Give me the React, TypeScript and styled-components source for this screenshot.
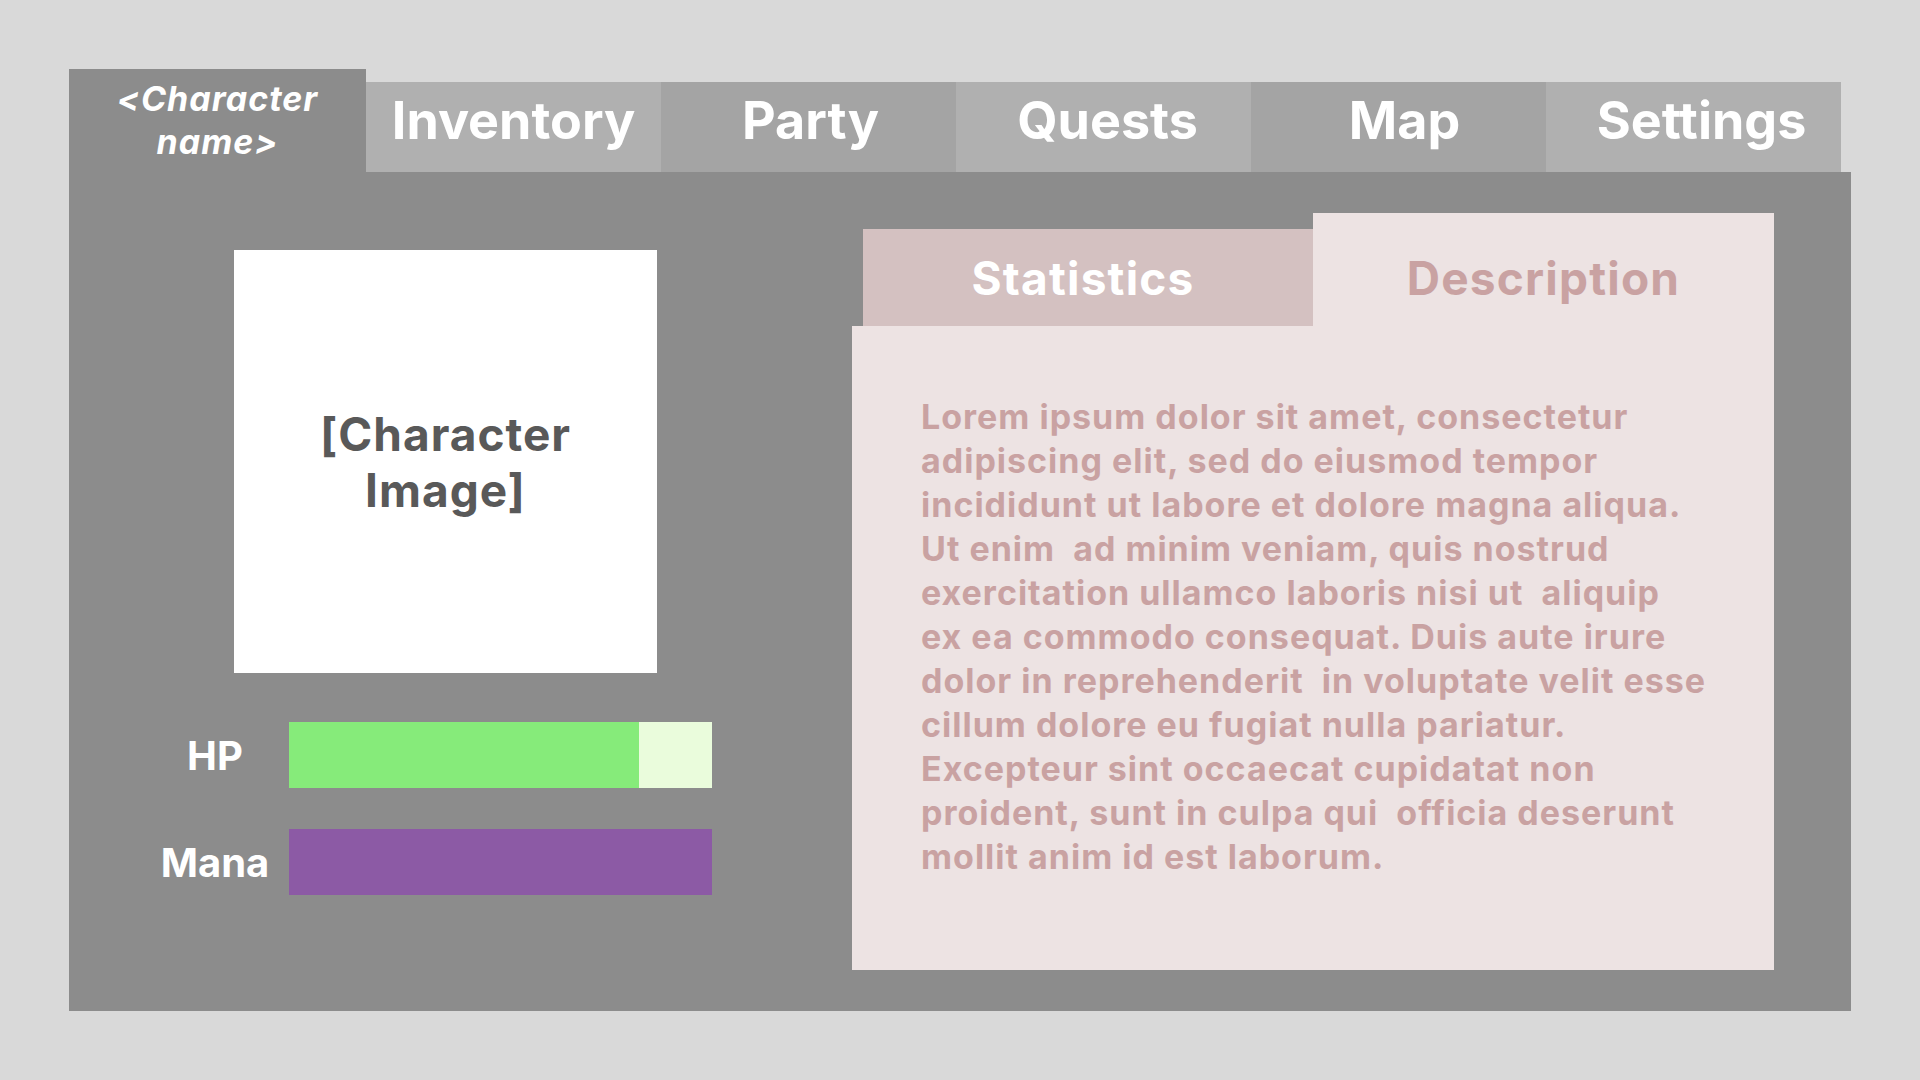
import styled, { createGlobalStyle } from "styled-components";

const GlobalStyle = createGlobalStyle`
  html, body {
    margin: 0;
    padding: 0;
    background: #d9d9d9;
  }
  body {
    font-family: Inter, "Noto Sans", "Liberation Sans", sans-serif;
  }
`;

const Page = styled.div`
  width: 1920px;
  height: 1080px;
  padding: 69px 0 0 69px;
  box-sizing: border-box;
`;

const Window = styled.div`
  width: 1782px;
  display: flex;
  flex-direction: column;
`;

const TopTabs = styled.div`
  display: flex;
  align-items: flex-end;
  height: 103px;
`;

const NameTab = styled.div`
  width: 297px;
  height: 103px;
  background: #8c8c8c;
  color: #fff;
  font-size: 34px;
  font-weight: 700;
  font-style: italic;
  letter-spacing: 1px;
  line-height: 43px;
  text-align: center;
  display: flex;
  align-items: center;
  justify-content: center;
  padding-bottom: 1px;
  box-sizing: border-box;
`;

const TopTab = styled.div<{ $shade: string; $nudge: number }>`
  width: 295px;
  height: 90px;
  background: ${({ $shade }) => $shade};
  color: #fff;
  font-size: 52px;
  font-weight: 700;
  display: flex;
  align-items: flex-end;
  justify-content: center;
  padding-bottom: 20px;
  padding-left: ${({ $nudge }) => $nudge}px;
  box-sizing: border-box;
`;

const Panel = styled.div`
  background: #8c8c8c;
  height: 839px;
  display: flex;
  padding: 41px 77px 41px 0;
  box-sizing: border-box;
`;

const LeftColumn = styled.div`
  width: 783px;
  flex-shrink: 0;
  display: flex;
  flex-direction: column;
  padding-left: 72px;
  padding-top: 37px;
  box-sizing: border-box;
`;

const Portrait = styled.div`
  width: 423px;
  height: 423px;
  margin-left: 93px;
  background: #fff;
  color: #595959;
  font-size: 46px;
  font-weight: 700;
  letter-spacing: 1px;
  line-height: 56px;
  text-align: center;
  display: flex;
  align-items: center;
  justify-content: center;
`;

const Stats = styled.div`
  display: grid;
  grid-template-columns: 148px 423px;
  row-gap: 41px;
  margin-top: 49px;
`;

const StatLabel = styled.div`
  color: #fff;
  font-size: 40px;
  font-weight: 700;
  text-align: center;
  display: flex;
  align-items: center;
  justify-content: center;
`;

const Bar = styled.div<{ $track: string; $fill: string }>`
  height: 66px;
  background: ${({ $track }) => $track};
  display: flex;

  & > span {
    display: block;
    height: 100%;
    background: ${({ $fill }) => $fill};
  }
`;

const RightColumn = styled.div`
  width: 922px;
  display: flex;
  flex-direction: column;
`;

const InfoTabs = styled.div`
  display: flex;
  align-items: flex-end;
  padding-left: 11px;
`;

const InfoTab = styled.div<{ $active?: boolean }>`
  width: ${({ $active }) => ($active ? "461px" : "450px")};
  height: ${({ $active }) => ($active ? "113px" : "97px")};
  background: ${({ $active }) => ($active ? "#ede3e3" : "#d4c1c1")};
  color: ${({ $active }) => ($active ? "#c9a2a2" : "#fff")};
  font-size: 46px;
  font-weight: 700;
  letter-spacing: 1.2px;
  display: flex;
  align-items: flex-end;
  justify-content: center;
  padding-bottom: 20px;
  padding-right: ${({ $active }) => ($active ? "0" : "10px")};
  box-sizing: border-box;
`;

const InfoBody = styled.div`
  flex: 1;
  background: #ede3e3;
  padding: 69px 30px 0 69px;
  box-sizing: border-box;
`;

const Lorem = styled.p`
  margin: 0;
  color: #c9a2a2;
  font-size: 34px;
  font-weight: 700;
  letter-spacing: 1px;
  line-height: 44px;
  white-space: pre;
`;

const tabs = [
  { label: "Inventory", shade: "#b0b0b0" },
  { label: "Party", shade: "#a4a4a4" },
  { label: "Quests", shade: "#b0b0b0" },
  { label: "Map", shade: "#a4a4a4" },
  { label: "Settings", shade: "#b0b0b0" },
];

const loremLines = [
  "Lorem ipsum dolor sit amet, consectetur",
  "adipiscing elit, sed do eiusmod tempor",
  "incididunt ut labore et dolore magna aliqua.",
  "Ut enim  ad minim veniam, quis nostrud",
  "exercitation ullamco laboris nisi ut  aliquip",
  "ex ea commodo consequat. Duis aute irure",
  "dolor in reprehenderit  in voluptate velit esse",
  "cillum dolore eu fugiat nulla pariatur.",
  "Excepteur sint occaecat cupidatat non",
  "proident, sunt in culpa qui  officia deserunt",
  "mollit anim id est laborum.",
];

export default function App() {
  const hp = 0.827;
  const mana = 1;

  return (
    <>
      <GlobalStyle />
      <Page>
        <Window>
          <TopTabs>
            <NameTab>
              &lt;Character
              <br />
              name&gt;
            </NameTab>
            {tabs.map((t, i) => (
              <TopTab key={t.label} $shade={t.shade} $nudge={i * 4}>
                {t.label}
              </TopTab>
            ))}
          </TopTabs>

          <Panel>
            <LeftColumn>
              <Portrait>
                [Character
                <br />
                Image]
              </Portrait>
              <Stats>
                <StatLabel>HP</StatLabel>
                <Bar $track="#eafcdc" $fill="#86eb7a">
                  <span style={{ width: `${hp * 100}%` }} />
                </Bar>
                <StatLabel>Mana</StatLabel>
                <Bar $track="#d9c4e4" $fill="#8c5aa5">
                  <span style={{ width: `${mana * 100}%` }} />
                </Bar>
              </Stats>
            </LeftColumn>

            <RightColumn>
              <InfoTabs>
                <InfoTab>Statistics</InfoTab>
                <InfoTab $active>Description</InfoTab>
              </InfoTabs>
              <InfoBody>
                <Lorem>{loremLines.join("\n")}</Lorem>
              </InfoBody>
            </RightColumn>
          </Panel>
        </Window>
      </Page>
    </>
  );
}
